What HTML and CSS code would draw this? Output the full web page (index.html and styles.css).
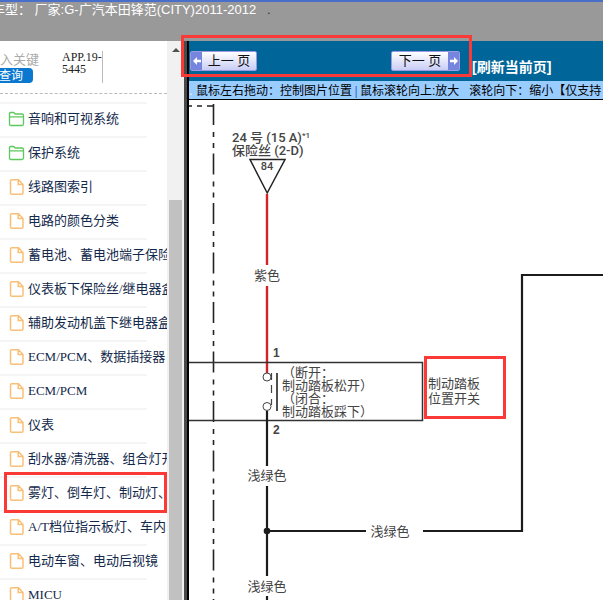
FILE: index.html
```
<!DOCTYPE html>
<html lang="zh-CN">
<head>
    <meta charset="UTF-8">
    <meta name="viewport" content="width=device-width, initial-scale=1">
    <title>广汽本田锋范(CITY)2011-2012 电路图</title>
    <link rel="stylesheet" href="styles.css">
</head>
<body>

<!-- shared icons -->
<svg class="symbols" aria-hidden="true">
    <symbol id="folder" viewBox="0 0 17 16">
        <path d="M1.5 13V2.8Q1.5 1.5 2.8 1.5H5.6L7.2 3H14Q15.5 3 15.5 4.5V13Q15.5 14.5 14 14.5H3Q1.5 14.5 1.5 13ZM1.5 5.8H15.5" fill="none" stroke="#5cc95c" stroke-width="1.3"/>
    </symbol>
    <symbol id="file" viewBox="0 0 17 16">
        <path d="M3.5 .8H10.5L15 5.6V14Q15 15.2 13.8 15.2H3.8Q2.5 15.2 2.5 14V2Q2.5 .8 3.5 .8ZM10.2 .8V5.6H15" fill="none" stroke="#fbc078" stroke-width="1.5"/>
    </symbol>
</svg>

<header class="topbar">车型： 厂家:G-广汽本田锋范(CITY)2011-2012 &nbsp; <span class="dot">.</span></header>

<div class="layout">
    <aside class="sidebar">
        <div class="side-content">
            <form class="search">
                <div class="search-box">
                    <input class="keyword" type="text" placeholder="入关键" aria-label="输入关键字">
                    <button class="search-btn" type="button">查询</button>
                </div>
                <div class="code">APP.19-5445</div>
            </form>
            <ul class="menu">
                <li><a href="#"><svg><use href="#folder"/></svg>音响和可视系统</a></li>
                <li><a href="#"><svg><use href="#folder"/></svg>保护系统</a></li>
                <li><a href="#"><svg><use href="#file"/></svg>线路图索引</a></li>
                <li><a href="#"><svg><use href="#file"/></svg>电路的颜色分类</a></li>
                <li><a href="#"><svg><use href="#file"/></svg>蓄电池、蓄电池端子保险</a></li>
                <li><a href="#"><svg><use href="#file"/></svg>仪表板下保险丝/继电器盒</a></li>
                <li><a href="#"><svg><use href="#file"/></svg>辅助发动机盖下继电器盒</a></li>
                <li><a href="#"><svg><use href="#file"/></svg>ECM/PCM、数据插接器</a></li>
                <li><a href="#"><svg><use href="#file"/></svg>ECM/PCM</a></li>
                <li><a href="#"><svg><use href="#file"/></svg>仪表</a></li>
                <li><a href="#"><svg><use href="#file"/></svg>刮水器/清洗器、组合灯开</a></li>
                <li><a href="#"><svg><use href="#file"/></svg>雾灯、倒车灯、制动灯、</a></li>
                <li><a href="#"><svg><use href="#file"/></svg>A/T档位指示板灯、车内</a></li>
                <li><a href="#"><svg><use href="#file"/></svg>电动车窗、电动后视镜</a></li>
                <li><a href="#"><svg><use href="#file"/></svg>MICU</a></li>
            </ul>
        </div>
        <div class="scrollbar">
            <div class="scroll-up"></div>
            <div class="scroll-thumb"></div>
        </div>
    </aside>

    <main class="viewer">
        <div class="toolbar">
            <button class="pager prev" type="button">
                <span class="arrow"><svg viewBox="0 0 9 9"><path d="M0 4.5L4.5 0V3H9V6H4.5V9Z" fill="#fff"/></svg></span>
                <span class="pager-text">上一 页</span>
            </button>
            <button class="pager next" type="button">
                <span class="pager-text">下一 页</span>
                <span class="arrow"><svg viewBox="0 0 9 9"><path d="M9 4.5L4.5 0V3H0V6H4.5V9Z" fill="#fff"/></svg></span>
            </button>
            <a class="refresh" href="#">[刷新当前页]</a>
        </div>
        <div class="hint"><span class="hint-dot">.</span>鼠标左右拖动：控制图片位置<span class="bar">|</span>鼠标滚轮向上:放大 &nbsp; 滚轮向下：缩小【仅支持</div>

        <div class="diagram">
            <svg width="414" height="500" viewBox="189 100 414 500">
                <!-- harness boundary -->
                <g fill="none" stroke="#222" stroke-width="1.6">
                    <path d="M189 106H192M197 106H202M207 106H213.5"/>
                    <path d="M213.5 104V600" stroke-dasharray="21 7 5 6 5 5.5"/>
                </g>

                <!-- fuse 24 -->
                <text class="label" x="232" y="142">24 号 (15 A)<tspan class="sup" dy="-4">*1</tspan></text>
                <text class="label" x="232" y="155">保险丝 (2-D)</text>
                <path d="M250 159.5H285L267.2 193Z" fill="none" stroke="#222" stroke-width="1.5"/>
                <text class="small mid" x="267" y="170">84</text>

                <!-- purple wire -->
                <path d="M267 194V265M267 286V373" stroke="#d2232a" stroke-width="2.4"/>
                <text class="mid" x="267" y="280">紫色</text>

                <!-- brake pedal position switch -->
                <path d="M189 362.5H422.5V420.5H189" fill="none" stroke="#333" stroke-width="1.5"/>
                <text class="pin" x="273" y="357">1</text>
                <text class="pin" x="273" y="434">2</text>
                <path d="M271.5 373V380M271.5 385V393M271.5 399V405" stroke="#444" stroke-width="1.2"/>
                <path d="M277 373V411" stroke="#222" stroke-width="1.6"/>
                <path d="M267 411V466M267 486V576M267 596V600" stroke="#1c1c1c" stroke-width="2.2"/>
                <g fill="#fff" stroke="#444">
                    <circle cx="267" cy="377" r="4"/>
                    <circle cx="267" cy="406.5" r="4"/>
                </g>
                <text x="282" y="377">（断开：</text>
                <text x="282" y="390">制动踏板松开）</text>
                <text x="282" y="403">（闭合：</text>
                <text x="282" y="416">制动踏板踩下）</text>
                <text x="428" y="388">制动踏板</text>
                <text x="428" y="403">位置开关</text>

                <!-- light green wires -->
                <path d="M267 531H366M423 531H522V275H603" fill="none" stroke="#1c1c1c" stroke-width="2.2"/>
                <circle cx="267" cy="531" r="3.3" fill="#1c1c1c"/>
                <text class="mid" x="267" y="480">浅绿色</text>
                <text class="mid" x="390" y="536">浅绿色</text>
                <text class="mid" x="267" y="591">浅绿色</text>
            </svg>
        </div>
    </main>
</div>

<div class="mark mark-pager"></div>
<div class="mark mark-menu"></div>
<div class="mark mark-switch"></div>

</body>
</html>
```
FILE: styles.css
```
* {
    box-sizing: border-box;
}
body {
    position: relative;
    display: flex;
    flex-direction: column;
    height: 100vh;
    margin: 0;
    overflow: hidden;
    background: #fff;
    font-family: "Liberation Sans", "Noto Sans CJK SC", sans-serif;
    font-size: 13px;
}
.symbols {
    display: none;
}
.topbar {
    flex: 0 0 41px;
    border-top: 2px solid #4a6fcb;
    background: #999;
    color: #fff;
    line-height: 16px;
    text-indent: -8px;
    white-space: nowrap;
}
.topbar .dot {
    color: #333;
}
.layout {
    display: flex;
    flex: 1;
    min-height: 0;
}

/* left menu */
.sidebar {
    display: flex;
    flex: 0 0 184px;
    font-family: "Liberation Serif", "Noto Sans CJK SC", serif;
}
.side-content {
    flex: 1;
    min-width: 0;
    overflow: hidden;
}
.search {
    display: flex;
    height: 53px;
    padding-top: 10px;
    border-bottom: 1px dashed #bbb;
}
.search-box {
    width: 62px;
}
.keyword {
    display: block;
    width: 100%;
    height: 17px;
    padding: 0;
    border: 0;
    background: none;
    font-family: inherit;
    font-size: 13px;
}
.keyword::placeholder {
    color: #aaa;
    opacity: 1;
}
.search-btn {
    display: flex;
    justify-content: flex-end;
    width: 33px;
    height: 15px;
    padding: 0 10px 0 0;
    border: 0;
    border-radius: 0 4px 4px 0;
    background: #0b78d0;
    color: #fff;
    font-family: "Noto Sans CJK SC", sans-serif;
    font-size: 12px;
    line-height: 14px;
    white-space: nowrap;
}
.code {
    width: 41px;
    height: 32px;
    border-right: 1px solid #bbb;
    color: #222;
    font-size: 12px;
    line-height: 12px;
}
.menu {
    width: 147px;
    margin: 0;
    padding: 8px 0 0;
    list-style: none;
}
.menu li {
    height: 34px;
    border-top: 2px solid #f5f5f5;
}
.menu a {
    display: flex;
    align-items: center;
    gap: 3px;
    height: 30px;
    padding-left: 8px;
    color: #13294b;
    line-height: 16px;
    text-decoration: none;
    white-space: nowrap;
}
.menu svg {
    flex: none;
    width: 17px;
    height: 16px;
}
.scrollbar {
    display: flex;
    flex: 0 0 17px;
    flex-direction: column;
    align-items: center;
    padding-top: 7px;
    background: #f1f1f1;
}
.scroll-up {
    margin-bottom: 148px;
    border: 4px solid transparent;
    border-top: 0;
    border-bottom-color: #505050;
}
.scroll-thumb {
    flex: 1;
    width: 13px;
    background: #c1c1c1;
}

/* diagram viewer */
.viewer {
    display: flex;
    flex: 1;
    flex-direction: column;
    min-width: 0;
    border-left: 3px solid #4a4a4a;
    box-shadow: inset 2px 0 #000;
    padding-left: 2px;
}
.toolbar {
    display: flex;
    flex: 0 0 40px;
    align-items: center;
    padding-left: 1px;
    background: #069;
}
.pager {
    display: flex;
    flex: none;
    width: 67px;
    height: 20px;
    padding: 0;
    border: 1px solid #9a9ae0;
    border-radius: 2px;
    background: linear-gradient(#fff, #c9cdf5);
    color: #111;
    font-family: "Liberation Sans", "Noto Sans CJK SC", sans-serif;
    font-size: 13px;
    line-height: 18px;
}
.prev {
    margin-right: 134px;
}
.next {
    width: 69px;
}
.pager-text {
    flex: 1;
    text-align: center;
    white-space: nowrap;
}
.arrow {
    display: flex;
    align-items: center;
    justify-content: center;
    width: 11px;
    height: 18px;
    background: #7686df;
}
.arrow svg {
    width: 8px;
    height: 8px;
}
.refresh {
    margin: 10px 0 0 12px;
    color: #fff;
    font-size: 14px;
    font-weight: bold;
    text-decoration: none;
    white-space: nowrap;
}
.hint {
    flex: 0 0 19px;
    overflow: hidden;
    border-bottom: 1px solid #000;
    background: #9cf;
    color: #000;
    font-size: 12px;
    line-height: 20px;
    white-space: nowrap;
}
.hint-dot {
    display: inline-block;
    width: 7px;
    color: #fff;
}
.hint .bar {
    display: inline-block;
    width: 8px;
    color: #36c;
    text-align: center;
}
.diagram {
    flex: 1;
    min-height: 0;
    overflow: hidden;
}
.diagram svg {
    display: block;
}
.diagram text {
    fill: #444;
    font-size: 13px;
}
.diagram .label,
.diagram .small {
    font-family: Roboto, "Noto Sans CJK SC", sans-serif;
    font-weight: 500;
}
.diagram .small {
    font-size: 11px;
}
.diagram .sup {
    font-size: 8px;
}
.diagram .pin {
    font-size: 12px;
    font-weight: bold;
}
.diagram .mid {
    text-anchor: middle;
}

/* red callout frames laid over the page */
.mark {
    position: absolute;
    border: 3px solid #fb3a38;
    pointer-events: none;
}
.mark-pager {
    top: 35px;
    left: 181px;
    width: 291px;
    height: 42px;
}
.mark-menu {
    top: 472px;
    left: 4px;
    width: 163px;
    height: 41px;
}
.mark-switch {
    top: 356px;
    left: 424px;
    width: 82px;
    height: 63px;
}
```
